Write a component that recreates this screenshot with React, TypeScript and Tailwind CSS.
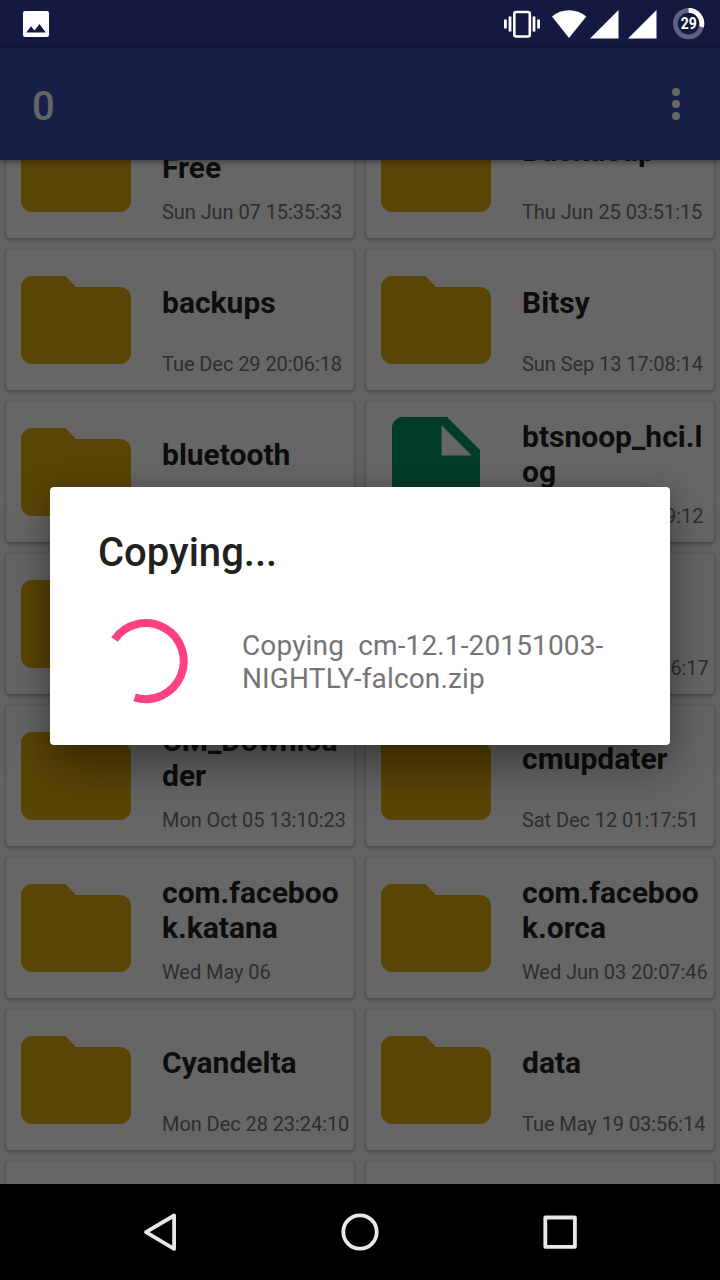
import React from "react";

type Entry = { lines: string[]; date: string; kind?: "folder" | "file" };

const entries: Entry[] = [
  { lines: ["\u00a0", "Free"], date: "Sun Jun 07 15:35:33" },
  { lines: ["Backucup"], date: "Thu Jun 25 03:51:15" },
  { lines: ["backups"], date: "Tue Dec 29 20:06:18" },
  { lines: ["Bitsy"], date: "Sun Sep 13 17:08:14" },
  { lines: ["bluetooth"], date: "" },
  { lines: ["btsnoop_hci.l", "og"], date: "Sun Dec 27 11:59:12", kind: "file" },
  { lines: [], date: "" },
  { lines: ["CM-12.10-", "\u00a0"], date: "Wed Dec 30 16:26:17" },
  { lines: ["CM_Downloa", "der"], date: "Mon Oct 05 13:10:23" },
  { lines: ["cmupdater"], date: "Sat Dec 12 01:17:51" },
  { lines: ["com.faceboo", "k.katana"], date: "Wed May 06" },
  { lines: ["com.faceboo", "k.orca"], date: "Wed Jun 03 20:07:46" },
  { lines: ["Cyandelta"], date: "Mon Dec 28 23:24:10" },
  { lines: ["data"], date: "Tue May 19 03:56:14" },
  { lines: [], date: "" },
  { lines: [], date: "" },
];

function EntryIcon({ kind = "folder" }: { kind?: "folder" | "file" }) {
  return (
    <svg viewBox="0 0 24 24" className="size-[132px] shrink-0">
      {kind === "folder" ? (
        <path fill="#5b4506" d="M10 4H4c-1.1 0-2 .9-2 2v12c0 1.1.9 2 2 2h16c1.1 0 2-.9 2-2V8c0-1.1-.9-2-2-2h-8l-2-2z" />
      ) : (
        <path fill="#003c28" d="M6 2c-1.1 0-2 .9-2 2v16c0 1.1.9 2 2 2h12c1.1 0 2-.9 2-2V8l-6-6H6zm7 7V3.5L18.5 9H13z" />
      )}
    </svg>
  );
}

function Card({ entry }: { entry: Entry }) {
  return (
    <div className="flex h-[140px] rounded-[4px] bg-[#666666] p-1 shadow-[0_2px_4px_rgba(0,0,0,0.28),0_0_2px_rgba(0,0,0,0.15)]">
      <EntryIcon kind={entry.kind} />
      <div className="flex min-w-0 flex-1 flex-col pl-5">
        <div className="flex h-[98px] flex-col justify-center pb-[2px] text-[30px] leading-[35px] font-bold whitespace-nowrap text-[#0d0d0d]">
          {entry.lines.map((line, i) => (
            <div key={i}>{line}</div>
          ))}
        </div>
        <div className="text-[20px] leading-6 tracking-[-0.07px] whitespace-nowrap text-[#2e2e2e]">{entry.date}</div>
      </div>
    </div>
  );
}

function StatusBar() {
  return (
    <div className="flex h-12 shrink-0 items-center bg-[#131940]">
      <svg viewBox="0 0 720 48" className="h-12 w-[720px]">
        <path
          fill="#fff"
          fillRule="evenodd"
          d="M25 11h22a2 2 0 0 1 2 2v22a2 2 0 0 1-2 2h-22a2 2 0 0 1-2-2v-22a2 2 0 0 1 2-2zM26.300 32.500h19.400L39.500 24l-5 6.500-3.500-4.200z"
        />
        <rect x="514.300" y="12" width="15.500" height="24.500" rx="2" fill="none" stroke="#fff" strokeWidth="2.600" />
        <path stroke="#fff" strokeWidth="2.800" d="M505.400 19.500v9M510 16.500v15M534 16.500v15M538.600 19.500v9" />
        <path fill="#fff" d="M552 16.500C561.500 8 576.500 8 586.300 16.500L569 38z" />
        <path fill="#fff" d="M618.500 10v28.500H590zM656.500 10v28.500H628z" />
        <circle cx="688.600" cy="23.600" r="13.200" fill="none" stroke="#5f6280" strokeWidth="4.800" />
        <path d="M688.600 10.400A13.200 13.200 0 0 1 701.500 26.800" fill="none" stroke="#fff" strokeWidth="4.800" />
        <text x="688.800" y="29" textAnchor="middle" fontSize="16" fontWeight="700" fill="#fff" textLength="16" lengthAdjust="spacingAndGlyphs">
          29
        </text>
      </svg>
    </div>
  );
}

function Toolbar() {
  return (
    <div className="relative z-10 flex h-28 shrink-0 items-center justify-between bg-[#192048] pr-8 pl-8 shadow-[0_2px_6px_rgba(0,0,0,0.4)]">
      <div className="pt-[6px] text-[40px] leading-[48px] font-medium text-[#666666]">0</div>
      <div className="flex w-6 flex-col items-center gap-1">
        <span className="size-2 rounded-full bg-[#666666]" />
        <span className="size-2 rounded-full bg-[#666666]" />
        <span className="size-2 rounded-full bg-[#666666]" />
      </div>
    </div>
  );
}

function NavigationBar() {
  return (
    <div className="relative z-10 h-24 shrink-0 bg-black">
      <svg viewBox="0 0 720 96" className="h-24 w-[720px]" fill="none" stroke="#e8e8e8" strokeWidth="3.800" strokeLinejoin="round">
        <path d="M174.100 31.500v33.400L146 48.100z" />
        <circle cx="360" cy="48" r="16.700" />
        <rect x="545.300" y="33.500" width="29.600" height="29.300" />
      </svg>
    </div>
  );
}

function ProgressDialog() {
  return (
    <div className="absolute top-[487px] left-[50px] z-20 flex h-[258px] w-[620px] flex-col rounded-[4px] bg-white px-12 pt-[41px] shadow-[0_24px_48px_rgba(0,0,0,0.36),0_0_24px_rgba(0,0,0,0.16)]">
      <h1 className="text-[40px] leading-[50px] font-medium text-[#212121]">Copying...</h1>
      <div className="mt-[35px] flex items-center">
        <svg viewBox="0 0 96 96" className="size-24 shrink-0">
          <path d="M16.500 26.500A38 38 0 1 1 36.600 84.400" fill="none" stroke="#ff4081" strokeWidth="8" />
        </svg>
        <p className="pt-[2px] pl-12 text-[28px] leading-[33px] tracking-[0.14px] whitespace-pre text-[#757575]">{"Copying  cm-12.1-20151003-\nNIGHTLY-falcon.zip"}</p>
      </div>
    </div>
  );
}

export default function App() {
  return (
    <div className="relative flex h-[1280px] w-[720px] flex-col overflow-hidden bg-[#646464] font-[Roboto,sans-serif]">
      <StatusBar />
      <Toolbar />
      <main className="h-[1024px] shrink-0 overflow-hidden">
        <div className="-mt-[62px] grid grid-cols-2 gap-3 px-1.5">
          {entries.map((entry, i) => (
            <Card key={i} entry={entry} />
          ))}
        </div>
      </main>
      <NavigationBar />
      <ProgressDialog />
    </div>
  );
}
